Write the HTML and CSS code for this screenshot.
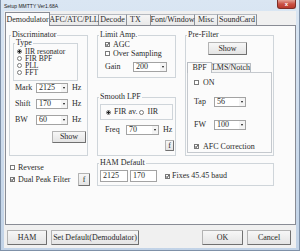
FILE: index.html
```html
<!DOCTYPE html>
<html>
<head>
<meta charset="utf-8">
<title>Setup MMTTY</title>
<link rel="stylesheet" href="styles.css">
</head>
<body>
<div class="window">
  <div class="titlebar">
    <span class="title">Setup MMTTY Ver1.68A</span>
    <span class="close">x</span>
  </div>
  <div class="client">
    <div class="tabs">
      <div class="tab active">Demodulator</div>
      <div class="tab t-afc">AFC/ATC/PLL</div>
      <div class="tab t-dec">Decode</div>
      <div class="tab t-tx">TX</div>
      <div class="tab t-font">Font/Window</div>
      <div class="tab t-misc">Misc</div>
      <div class="tab t-sound">SoundCard</div>
    </div>
    <div class="panel">
      <fieldset class="grp disc">
        <legend>Discriminator</legend>
        <fieldset class="grp type">
          <legend>Type</legend>
          <div class="rrow"><span class="radio on"></span>IIR resonator</div>
          <div class="rrow"><span class="radio"></span>FIR BPF</div>
          <div class="rrow"><span class="radio"></span>PLL</div>
          <div class="rrow"><span class="radio"></span>FFT</div>
        </fieldset>
        <div class="frow dfirst"><span class="lbl w21">Mark</span><span class="combo w32">2125<span class="dd"></span></span><span class="hz">Hz</span></div>
        <div class="frow"><span class="lbl w21">Shift</span><span class="combo w32">170<span class="dd"></span></span><span class="hz">Hz</span></div>
        <div class="frow"><span class="lbl w21">BW</span><span class="combo w32">60<span class="dd"></span></span><span class="hz">Hz</span></div>
        <button class="btn show1">Show</button>
      </fieldset>

      <div class="col2">
        <fieldset class="grp limit">
          <legend>Limit Amp.</legend>
          <div class="crow first"><span class="chk"><svg viewBox="0 0 5 5"><path d="M1 2.4 L2.1 3.6 L4 1.1"/></svg></span>AGC</div>
          <div class="crow"><span class="chk"></span>Over Sampling</div>
          <div class="frow gain"><span class="lbl w28">Gain</span><span class="combo w34">200<span class="dd"></span></span></div>
        </fieldset>
        <fieldset class="grp smooth">
          <legend>Smooth LPF</legend>
          <div class="rbox"><span class="radio on"></span>FIR av.<span class="radio iir"></span>IIR</div>
          <div class="frow freq"><span class="lbl w21">Freq</span><span class="combo w33">70<span class="dd"></span></span><span class="hz">Hz</span></div>
          <button class="btn fbtn">f</button>
        </fieldset>
      </div>

      <fieldset class="grp pre">
        <legend>Pre-Filter</legend>
        <button class="btn show2">Show</button>
        <div class="itabs">
          <div class="itab active">BPF</div>
          <div class="itab">LMS/Notch</div>
        </div>
        <div class="ipanel">
          <div class="crow on-row"><span class="chk"></span>ON</div>
          <div class="frow tap"><span class="lbl w20">Tap</span><span class="combo w32">56<span class="dd"></span></span></div>
          <div class="frow fw"><span class="lbl w20">FW</span><span class="combo w32">100<span class="dd"></span></span></div>
          <div class="crow afc"><span class="chk"><svg viewBox="0 0 5 5"><path d="M1 2.4 L2.1 3.6 L4 1.1"/></svg></span>AFC Correction</div>
        </div>
      </fieldset>

      <div class="checks">
        <div class="clist">
          <div class="crow"><span class="chk"></span>Reverse</div>
          <div class="crow dual"><span class="chk"><svg viewBox="0 0 5 5"><path d="M1 2.4 L2.1 3.6 L4 1.1"/></svg></span>Dual Peak Filter</div>
        </div>
        <button class="btn fbtn2">f</button>
      </div>

      <fieldset class="grp ham">
        <legend>HAM Default</legend>
        <div class="hrow">
          <span class="edit w28">2125</span>
          <span class="edit w27">170</span>
          <span class="crow fixes"><span class="chk"><svg viewBox="0 0 5 5"><path d="M1 2.4 L2.1 3.6 L4 1.1"/></svg></span>Fixes 45.45 baud</span>
        </div>
      </fieldset>
    </div>
    <div class="btnrow">
      <button class="btn b-ham">HAM</button>
      <button class="btn b-def">Set Default(Demodulator)</button>
      <button class="btn b-ok">OK</button>
      <button class="btn b-cancel">Cancel</button>
    </div>
  </div>
</div>
</body>
</html>
```

FILE: styles.css
```css
* { box-sizing: border-box; }
html, body { margin: 0; padding: 0; }
body {
  width: 300px; height: 251px; overflow: hidden;
  background: #bfd0e4;
  font-family: "Liberation Serif", "Times New Roman", serif;
  font-size: 8px; line-height: 8px; color: #2a2a2a;
}
.window {
  width: 300px; height: 251px;
  display: flex; flex-direction: column;
  background: linear-gradient(#dae6f3, #c2d3e7);
  border: 1px solid #7f91a8; border-top: 0;
  padding: 0 3px 2px 3px;
}
.titlebar { height: 11px; flex: none; position: relative; display: flex; align-items: center; }
.title { font-family: "Liberation Sans", Arial, sans-serif; font-size: 5px; line-height: 6px; color: #1b1b1b; }
.close {
  position: absolute; top: 0; right: 0;
  width: 19px; height: 9px;
  background: linear-gradient(#e3a397, #cb5144 50%, #b9392c);
  border: 1px solid #7d2e27; border-top: 0; border-radius: 0 0 3px 3px;
  color: #fff; font-family: "Liberation Sans", Arial, sans-serif; font-weight: bold; font-size: 6px;
  display: flex; align-items: center; justify-content: center;
}
.client { flex: 1; background: #f0f0f0; display: flex; flex-direction: column; }

.tabs { display: flex; align-items: flex-end; height: 13px; margin-top: 1px; padding-left: 1px; flex: none; }
.tab {
  height: 11px; display: flex; align-items: center; justify-content: center;
  border: 1px solid #b4b8be; border-left: 0; border-bottom: 0; border-right-color: #8c9097;
  background: linear-gradient(#f5f5f5, #e9e9e9);
  white-space: nowrap;
}
.tab.active { width: 45px; height: 14px; margin-bottom: -1px; border-left: 1px solid #898c95; border-color: #898c95; background: #fbfbfb; position: relative; z-index: 1; }
.t-afc { width: 49px; }
.t-dec { width: 28px; }
.t-tx { width: 24px; justify-content: flex-start; padding-left: 3px; }
.t-font { width: 44px; }
.t-misc { width: 23px; }
.t-sound { width: 39px; }

.panel {
  margin-left: 1px; width: 291px; height: 200px; flex: none;
  border: 1px solid #898c95; background: #fbfbfb;
  display: grid;
  grid-template-columns: 79px 79px 89px;
  grid-template-rows: 125px 27px;
  column-gap: 9px; row-gap: 3px;
  padding: 5px 0 0 3px;
  align-content: start;
}

.grp { margin: 0; padding: 0; border: 1px solid #cfd5da; min-width: 0; }
.grp > legend { padding: 0 1px; margin-left: 1px; line-height: 8px; height: 8px; white-space: nowrap; }

.type { margin: 0 0 0 3px; width: 65px; padding: 1px 0 4px 0; }
.rrow { display: flex; align-items: center; height: 7px; line-height: 7px; font-size: 7.6px; padding-left: 3px; white-space: nowrap; }
.radio {
  width: 5px; height: 5px; flex: none; border: 1px solid #7a7a7a; border-radius: 50%;
  background: #fff; margin-right: 3px;
}
.radio.on { background: radial-gradient(circle, #1e1e1e 0 1px, #fff 1.3px); }
.radio.iir { margin-left: 2px; }

.frow { display: flex; align-items: center; height: 10px; margin-top: 6px; padding-left: 5px; white-space: nowrap; }
.dfirst { margin-top: 2px; }
.lbl { flex: none; }
.w20 { width: 20px; } .w21 { width: 21px; } .w27 { width: 27px; } .w28 { width: 28px; }
.w32 { width: 32px; } .w33 { width: 33px; } .w34 { width: 34px; }
.combo {
  height: 10px; flex: none; border: 1px solid #a3a3a3; background: #fff;
  display: flex; align-items: center; justify-content: space-between; padding-left: 2px;
}
.dd { width: 6px; height: 8px; display: flex; align-items: center; justify-content: center; background: #f4f4f4; }
.dd::after { content: ""; border-left: 1.5px solid transparent; border-right: 1.5px solid transparent; border-top: 2px solid #111; }
.hz { margin-left: 4px; }

.btn {
  font: inherit; color: #2a2a2a; padding: 0; margin: 0;
  border: 1px solid #b3b3b3; border-right-color: #707070; border-bottom-color: #707070;
  border-radius: 1px;
  background: linear-gradient(#f7f7f7, #e4e4e4);
  display: flex; align-items: center; justify-content: center; white-space: nowrap;
}
.show1 { margin: 6px 0 0 42px; width: 34px; height: 12px; }

.col2 { display: flex; flex-direction: column; justify-content: space-between; }
.limit { height: 47px; }
.smooth { height: 63px; }
.crow { display: flex; align-items: center; height: 9px; padding-left: 7px; white-space: nowrap; }
.crow.first { margin-top: 1px; }
.chk {
  width: 5px; height: 5px; flex: none; border: 1px solid #7a7a7a; background: #fff; margin-right: 3px;
  display: flex;
}
.chk svg { width: 5px; height: 5px; margin: -1px; overflow: visible; }
.chk path { fill: none; stroke: #1a1a1a; stroke-width: 0.9; }
.gain { margin-top: 4px; padding-left: 7px; }

.rbox {
  margin: 3px 0 0 2px; width: 73px; height: 16px;
  border: 1px solid #cfd5da; display: flex; align-items: center; padding-left: 5px; white-space: nowrap;
}
.freq { margin-top: 5px; padding-left: 7px; }
.fbtn { width: 9px; height: 11px; margin: 5px 1px 0 auto; }

.show2 { margin: 3px 0 0 22px; width: 39px; height: 13px; }
.itabs { display: flex; align-items: flex-end; height: 10px; margin-top: 7px; padding-left: 1px; }
.itab {
  height: 9px; display: flex; align-items: center; justify-content: center;
  border: 1px solid #b9bdc3; border-left: 0; border-bottom: 0; background: #f3f3f3; white-space: nowrap;
  width: 39px;
}
.itab.active { width: 25px; height: 11px; margin-bottom: -1px; border-left: 1px solid #b9bdc3; background: #fbfbfb; position: relative; z-index: 1; }
.ipanel { margin: 0 1px 1px 1px; height: 81px; border: 1px solid #c5c9ce; padding: 5px 0 0 6px; }
.ipanel .crow { padding-left: 0; }
.ipanel .chk { margin-right: 4px; }
.ipanel .frow { padding-left: 0; }
.tap { margin-top: 10px; }
.fw { margin-top: 13px; }
.crow.afc { margin-top: 12px; }

.checks { display: flex; justify-content: space-between; }
.clist { padding-top: 4px; padding-left: 1px; }
.clist .crow { padding-left: 0; }
.crow.dual { margin-top: 3px; }
.fbtn2 { width: 12px; height: 13px; margin: 14px -2px 0 0; }

.ham { grid-column: 2 / 4; }
.hrow { display: flex; align-items: center; margin-top: 3px; padding-left: 2px; }
.edit {
  height: 12px; flex: none; border: 1px solid #a3a3a3; background: #fff;
  display: flex; align-items: center; padding-left: 2px;
}
.edit.w27 { margin-left: 2px; }
.crow.fixes { padding-left: 8px; }
.crow.fixes .chk { margin-right: 2px; }

.btnrow { display: flex; margin-top: 5px; padding: 0 5px 0 3px; flex: none; }
.btnrow .btn { height: 15px; }
.b-ham { width: 40px; }
.b-def { width: 88px; margin-left: 4px; }
.b-ok { width: 41px; margin-left: auto; }
.b-cancel { width: 44px; margin-left: 4px; }
```
